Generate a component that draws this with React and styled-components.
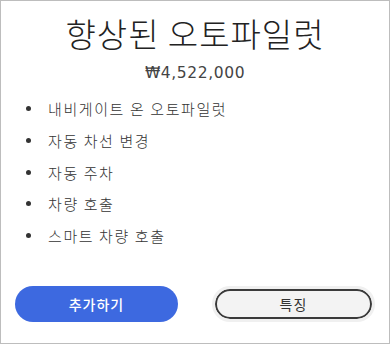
import styled, { createGlobalStyle } from 'styled-components';

const Global = createGlobalStyle`
  body {
    margin: 0;
    background: #fff;
    font-family: 'Noto Sans', 'Noto Sans CJK KR', sans-serif;
  }
`;

const Card = styled.div`
  box-sizing: border-box;
  width: 390px;
  height: 344px;
  border: 1px solid #bdbdbd;
  display: flex;
  flex-direction: column;
  align-items: center;
`;

const Title = styled.h1`
  margin: 10px 0 0;
  font-size: 33px;
  font-weight: 300;
  letter-spacing: 1px;
  line-height: 44px;
  color: #222;
  font-family: 'Noto Sans CJK KR', sans-serif;
`;

const Price = styled.div`
  margin-top: 8px;
  font-size: 15.5px;
  font-weight: 400;
  letter-spacing: 0.6px;
  line-height: 20px;
  color: #444;
  font-family: 'DejaVu Sans', 'Noto Sans CJK KR', sans-serif;
`;

const List = styled.ul`
  align-self: stretch;
  list-style: none;
  margin: 10px 0 0;
  padding: 0 0 0 25px;
`;

const Item = styled.li`
  display: flex;
  align-items: center;
  gap: 17px;
  height: 31.7px;
  font-size: 15px;
  font-weight: 300;
  letter-spacing: 1.6px;
  color: #333;
  font-family: 'Noto Sans CJK KR', sans-serif;

  &::before {
    content: '';
    width: 5px;
    height: 5px;
    border-radius: 50%;
    background: #333;
    flex-shrink: 0;
  }
`;

const Buttons = styled.div`
  align-self: stretch;
  margin-top: auto;
  margin-bottom: 21px;
  padding: 0 14px;
  display: flex;
  justify-content: space-between;
`;

const Button = styled.button`
  box-sizing: border-box;
  width: 163px;
  height: 36px;
  border-radius: 18px;
  font-size: 14px;
  letter-spacing: 1px;
  font-family: 'Noto Sans CJK KR', sans-serif;
  cursor: pointer;
  background: ${(p) => (p.primary ? '#3d69e0' : '#f3f3f3')};
  color: ${(p) => (p.primary ? '#fff' : '#333')};
  border: ${(p) => (p.primary ? 'none' : '3px solid #f0f0f0')};
  box-shadow: ${(p) => (p.primary ? 'none' : 'inset 0 0 0 2px #3a3a3a')};
  font-weight: ${(p) => (p.primary ? 500 : 400)};
`;

const features = ['내비게이트 온 오토파일럿', '자동 차선 변경', '자동 주차', '차량 호출', '스마트 차량 호출'];

export default function App() {
  return (
    <>
      <Global />
      <Card>
        <Title>향상된 오토파일럿</Title>
        <Price>₩4,522,000</Price>
        <List>
          {features.map((f) => (
            <Item key={f}>{f}</Item>
          ))}
        </List>
        <Buttons>
          <Button primary>추가하기</Button>
          <Button>특징</Button>
        </Buttons>
      </Card>
    </>
  );
}
